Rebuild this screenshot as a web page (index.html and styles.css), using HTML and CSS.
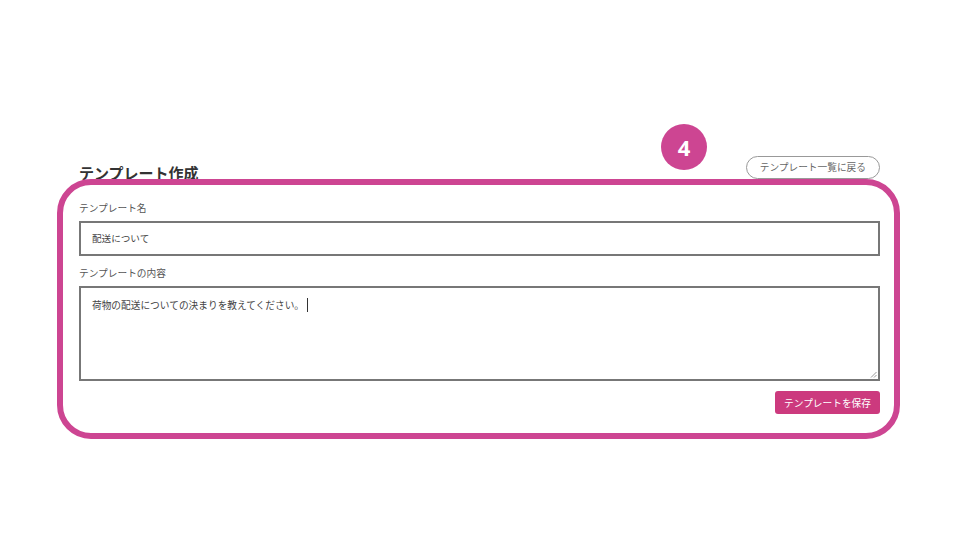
FILE: index.html
```html
<!DOCTYPE html>
<html lang="ja">
<head>
    <meta charset="UTF-8">
    <meta name="viewport" content="width=device-width, initial-scale=1.0">
    <title>テンプレート作成</title>
    <link rel="stylesheet" href="styles.css">
</head>
<body>
    <div class="page">
        <div class="header">
            <h1>テンプレート作成</h1>
            <button class="btn-back">テンプレート一覧に戻る</button>
        </div>

        <div class="form">
            <label class="label">テンプレート名</label>
            <div class="input">配送について</div>

            <label class="label label-content">テンプレートの内容</label>
            <div class="textarea">
                荷物の配送についての決まりを教えてください。<span class="caret"></span>
                <svg class="grip" width="7" height="7" viewBox="0 0 7 7">
                    <path d="M6.5 1 L1 6.5 M6.5 4 L4 6.5" stroke="#999" stroke-width="1" fill="none"/>
                </svg>
            </div>

            <div class="actions">
                <button class="btn-save">テンプレートを保存</button>
            </div>
        </div>
    </div>

    <!-- annotation overlay -->
    <div class="frame"></div>
    <div class="badge">4</div>
</body>
</html>
```

FILE: styles.css
```css
body {
    margin: 0;
    background: #fff;
    font-family: "Noto Sans CJK JP", "Noto Sans", sans-serif;
    color: #444;
}
.page {
    width: 801px;
    margin-left: 79px;
    padding-top: 156px;
}
.header {
    display: flex;
    justify-content: space-between;
    align-items: flex-start;
    height: 28px;
}
.header h1 {
    margin: 6px 0 0;
    font-size: 15px;
    font-weight: 600;
    line-height: 22px;
    color: #333;
}
.btn-back {
    height: 23px;
    padding: 0 13px;
    margin-right: 0;
    border: 1px solid #999;
    border-radius: 12px;
    background: #fff;
    color: #666;
    font-family: inherit;
    font-size: 9.7px;
    line-height: 21px;
}
.form {
    padding-top: 17px;
}
.label {
    display: block;
    font-size: 9.7px;
    line-height: 14px;
    color: #555;
    margin-bottom: 6px;
}
.label-content {
    margin-top: 10px;
    margin-bottom: 6px;
}
.input {
    height: 35px;
    box-sizing: border-box;
    border: 2px solid #777;
    padding: 0 11px;
    font-size: 9.6px;
    line-height: 31px;
    color: #444;
}
.textarea {
    position: relative;
    height: 95px;
    box-sizing: border-box;
    border: 2px solid #777;
    padding: 9px 11px;
    font-size: 9.7px;
    line-height: 16px;
    color: #444;
}
.caret {
    display: inline-block;
    width: 0;
    height: 14px;
    border-left: 1px solid #333;
    margin-left: 3px;
    vertical-align: -3px;
}
.grip {
    position: absolute;
    right: 1px;
    bottom: 1px;
}
.actions {
    display: flex;
    justify-content: flex-end;
    padding-top: 10px;
}
.btn-save {
    height: 23px;
    padding: 0 9px;
    border: none;
    border-radius: 3px;
    background: #cc3a7e;
    color: #fff;
    font-family: inherit;
    font-size: 9.7px;
}
.frame {
    position: absolute;
    left: 57px;
    top: 179px;
    width: 843px;
    height: 260px;
    box-sizing: border-box;
    border: 6px solid #cd4592;
    border-radius: 34px;
}
.badge {
    position: absolute;
    left: 661px;
    top: 124px;
    width: 46px;
    height: 46px;
    border-radius: 50%;
    background: #cd4592;
    color: #fff;
    font-family: "Noto Sans", sans-serif;
    font-weight: 700;
    font-size: 22px;
    line-height: 46px;
    text-align: center;
}
```
